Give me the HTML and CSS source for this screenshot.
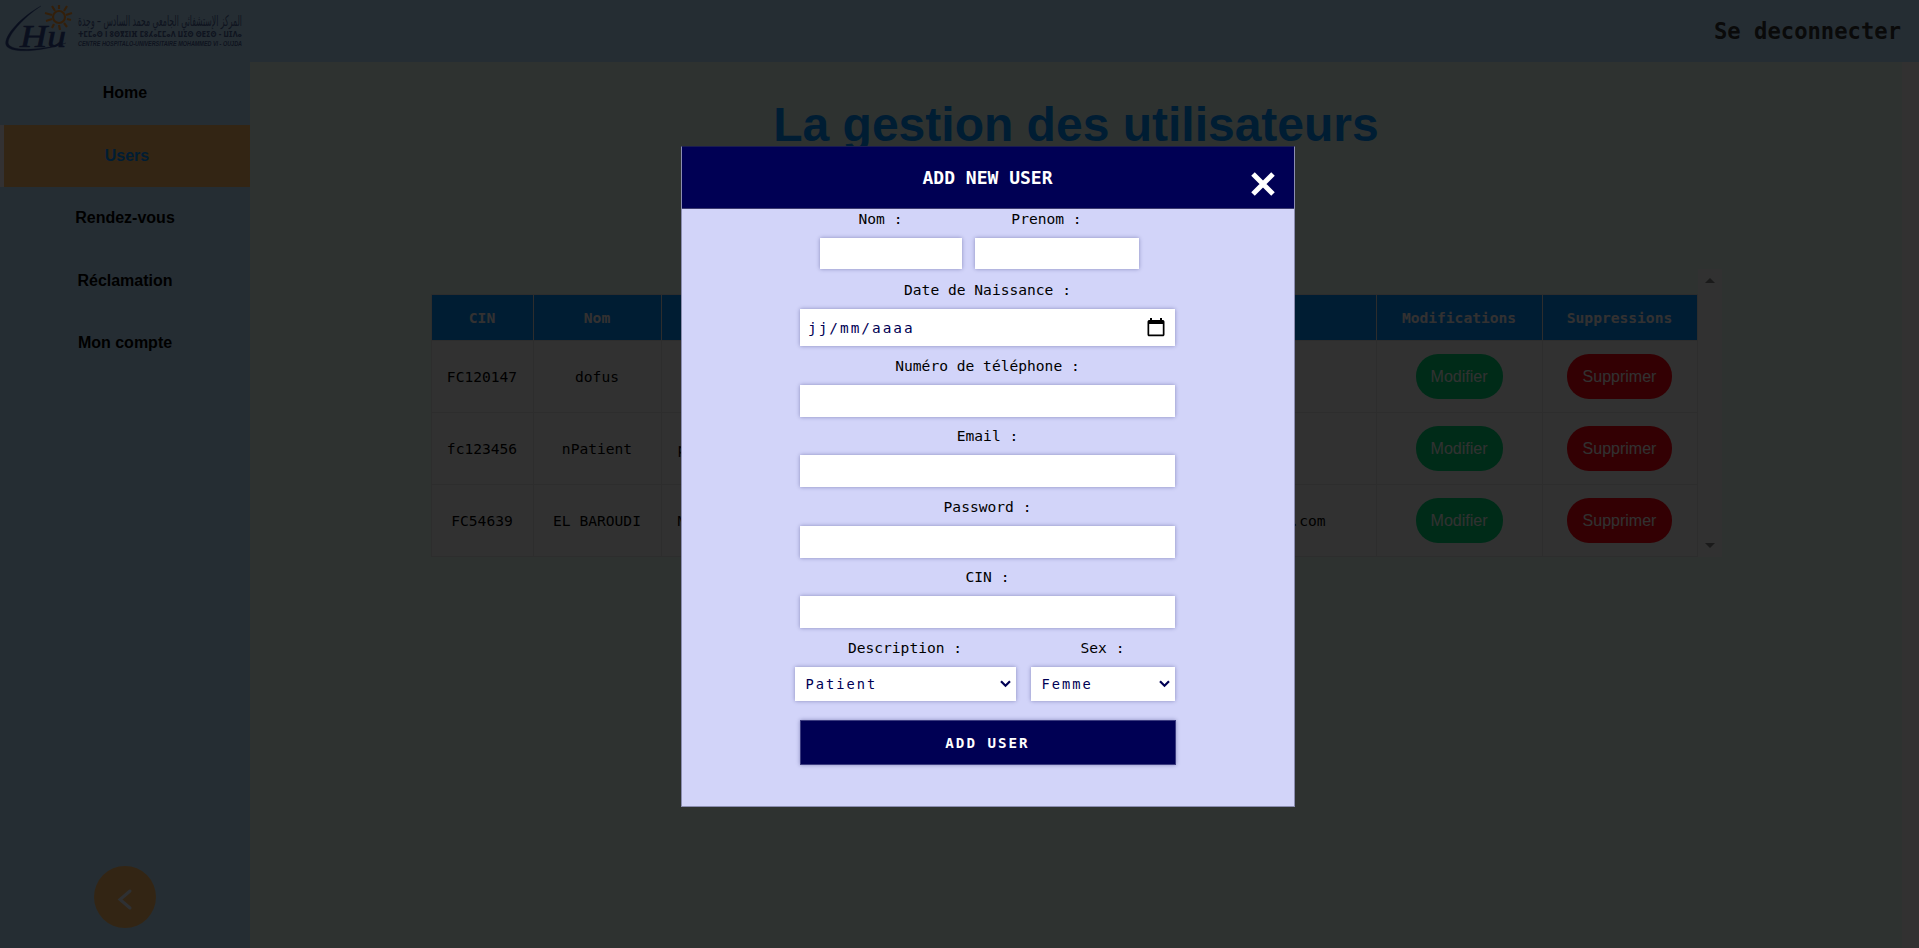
FILE: index.html
```html
<!DOCTYPE html>
<html lang="fr">
<head>
<meta charset="utf-8">
<title>La gestion des utilisateurs</title>
<link rel="stylesheet" href="styles.css">
</head>
<body>
<div class="app">
  <header class="topbar">
    <svg class="logo" width="250" height="62" viewBox="0 0 250 62">
      <path class="swoosh" d="M41 6C22 16 3 36 6 45C9 54 42 52 66 43C43 50 12 52 8.500 44C6 37 24 17 41 6Z"/>
      <text class="logo-hu" x="20" y="47" textLength="46" lengthAdjust="spacingAndGlyphs">Hu</text>
      <circle class="sun" cx="59" cy="17" r="6"/>
      <path class="sun" d="M59 9V5M64 11L67 6M66 15L72 13M67 19L71 20M64 23L67 27M59 25L60 30M54 24L52 28M52 19L46 21M52 15L45 13M55 11L52 6"/>
      <text class="logo-text arabic" x="242" y="26" direction="rtl" textLength="164" lengthAdjust="spacingAndGlyphs">المركز الإستشفائي الجامعي محمد السادس – وجدة</text>
      <text class="logo-text tifinagh" x="78" y="37" textLength="164" lengthAdjust="spacingAndGlyphs">ⵜⵎⵎⴰⵙ ⵏ ⵓⵙⴳⵉⵏⴼ ⵎⵓⵃⴰⵎⵎⴰⴷ ⵡⵉⵙ ⵙⴹⵉⵙ - ⵡⵊⴷⴰ</text>
      <text class="logo-text french" x="78" y="45.5" textLength="164" lengthAdjust="spacingAndGlyphs">CENTRE HOSPITALO-UNIVERSITAIRE MOHAMMED VI - OUJDA</text>
    </svg>
    <a class="logout">Se deconnecter</a>
  </header>
  <div class="columns">
    <nav class="sidebar">
      <a class="nav-item">Home</a>
      <a class="nav-item active">Users</a>
      <a class="nav-item">Rendez-vous</a>
      <a class="nav-item">Réclamation</a>
      <a class="nav-item">Mon compte</a>
      <button class="collapse" aria-label="Réduire">
        <svg width="62" height="62" viewBox="0 0 62 62"><path d="M36 25L26 33.500L36 42"/></svg>
      </button>
    </nav>
    <main class="content">
      <h1>La gestion des utilisateurs</h1>
      <div class="table-wrap">
        <table>
          <colgroup><col class="c1"><col class="c2"><col class="c3"><col class="c4"><col class="c5"><col class="c6"></colgroup>
          <tr><th>CIN</th><th>Nom</th><th></th><th></th><th>Modifications</th><th>Suppressions</th></tr>
          <tr><td>FC120147</td><td>dofus</td><td></td><td></td><td><button class="pill edit">Modifier</button></td><td><button class="pill delete">Supprimer</button></td></tr>
          <tr><td>fc123456</td><td>nPatient</td><td class="first-name">pPatient</td><td></td><td><button class="pill edit">Modifier</button></td><td><button class="pill delete">Supprimer</button></td></tr>
          <tr><td>FC54639</td><td>EL BAROUDI</td><td class="first-name">Mohamed</td><td class="mail">mohamed@gmail.com</td><td><button class="pill edit">Modifier</button></td><td><button class="pill delete">Supprimer</button></td></tr>
        </table>
        <div class="table-scroll"><i class="arrow up"></i><i class="arrow down"></i></div>
      </div>
    </main>
    <div class="page-scroll"></div>
  </div>
</div>
<div class="overlay">
  <section class="modal">
    <header class="modal-head">
      <h2>ADD NEW USER</h2>
      <svg class="close" width="26" height="26" viewBox="0 0 26 26"><path d="M3 3L23 23M23 3L3 23"/></svg>
    </header>
    <form class="form">
      <div class="row names">
        <label class="nom"><span class="caption">Nom :</span><span class="box"></span></label>
        <label class="prenom"><span class="caption">Prenom :</span><span class="box"></span></label>
      </div>
      <label class="date">Date de Naissance :
        <span class="box date-box"><span>jj/mm/aaaa</span>
          <svg width="18" height="19" viewBox="0 0 18 19"><path d="M16 2h-1V0h-2v2H5V0H3v2H2C1 2 .5 3 .5 4v12.500c0 1 .7 1.800 1.700 1.800h13.600c1 0 1.700-.8 1.700-1.800V4c0-1-.5-2-1.500-2zm-.2 14.600H2.200V6h13.600z"/></svg>
        </span>
      </label>
      <label class="tel">Numéro de téléphone :<span class="box"></span></label>
      <label class="email">Email :<span class="box"></span></label>
      <label class="password">Password :<span class="box"></span></label>
      <label class="cin">CIN :<span class="box"></span></label>
      <div class="row selects">
        <label class="role">Description :<span class="box select">Patient<svg width="11" height="8" viewBox="0 0 11 8"><path d="M1 1.200L5.500 5.800L10 1.200"/></svg></span></label>
        <label class="sex">Sex :<span class="box select">Femme<svg width="11" height="8" viewBox="0 0 11 8"><path d="M1 1.200L5.500 5.800L10 1.200"/></svg></span></label>
      </div>
      <button class="submit" type="button">ADD USER</button>
    </form>
  </section>
</div>
</body>
</html>
```
FILE: styles.css
```css
* { box-sizing: border-box; }
body {
  margin: 0;
  height: 948px;
  overflow: hidden;
  font-family: "DejaVu Sans Mono", monospace;
  font-size: 14.6px;
  color: #000;
}
.app { height: 948px; display: flex; flex-direction: column; background: #e6faf0; }
.topbar {
  height: 62px;
  flex: none;
  display: flex;
  justify-content: space-between;
  align-items: center;
  background: #b9e1ff;
  padding-right: 18px;
}
.logo { overflow: visible; }
.logout { font-size: 22.2px; font-weight: bold; color: #323232; margin-bottom: 1px; }
.swoosh { fill: #324b96; stroke: #324b96; stroke-width: .3; }
.logo-hu { font: italic 31px "Liberation Serif", serif; fill: #324b96; stroke: #324b96; stroke-width: .6; }
.sun { fill: none; stroke: #ff9b32; stroke-width: 2.2; }
.logo-text { fill: #4b649b; }
.arabic { font: 15px "DejaVu Sans", sans-serif; }
.tifinagh { font: bold 8.5px "DejaVu Sans", sans-serif; }
.french { font: italic bold 8px "Liberation Sans", sans-serif; }
.columns { flex: 1; display: flex; }
.sidebar {
  width: 250px;
  background: #b9e1ff;
  display: flex;
  flex-direction: column;
  align-items: center;
  padding-bottom: 20px;
}
.nav-item {
  width: 250px;
  height: 62.500px;
  display: flex;
  align-items: center;
  justify-content: center;
  font: bold 16px "Liberation Sans", Arial, sans-serif;
}
.nav-item.active { background: #ffb964; color: #0091ff; border-left: 4px solid #fff5fa; }
.collapse {
  margin-top: auto;
  width: 62px;
  height: 62px;
  padding: 0;
  border: 0;
  border-radius: 50%;
  background: #ffb964;
}
.collapse path { fill: none; stroke: #e6f0ff; stroke-width: 3; stroke-linecap: round; }
.content { flex: 1; display: flex; flex-direction: column; align-items: center; }
h1 {
  margin: 35px 0 0;
  font: bold 48px/55px "Liberation Sans", Arial, sans-serif;
  color: #0091ff;
}
.table-wrap { margin-top: 117px; display: flex; height: 288px; }
table { margin-top: 25px; width: 1266px; height: 263px; border-collapse: collapse; table-layout: fixed; background: #f5f5f5; }
.c1 { width: 102px; }
.c2 { width: 128px; }
.c3 { width: 150px; }
.c4 { width: 565px; }
.c5 { width: 166px; }
.c6 { width: 155px; }
th, td { border: 1px solid #e1e1e1; padding: 0; text-align: center; height: 72px; }
th { height: 46px; background: #0091ff; color: #fff5f5; }
.first-name { text-align: left; padding-left: 16px; }
.mail { text-align: right; padding-right: 50px; }
.pill {
  height: 45px;
  padding: 0;
  border: 0;
  border-radius: 22px;
  font: 16px "Liberation Sans", Arial, sans-serif;
  color: #f5f5f5;
}
.edit { width: 87px; background: #00d778; }
.delete { width: 105px; background: #ff000f; }
.table-scroll {
  width: 24px;
  background: #f5f5f5;
  display: flex;
  flex-direction: column;
  justify-content: space-between;
  align-items: center;
  padding: 9px 0;
}
.arrow { border: 5px solid transparent; }
.up { border-top: 0; border-bottom-color: #828282; }
.down { border-bottom: 0; border-top-color: #828282; }
.page-scroll { width: 17px; background: #faf5f5; }

.overlay {
  position: fixed;
  inset: 0;
  background: rgba(0, 0, 0, .8);
  display: flex;
  justify-content: center;
  align-items: flex-start;
  padding: 146px 0 0 56px;
}
.modal { width: 614px; height: 661px; background: #d2d4f9; border: 1px solid #8b8db0; border-top-color: #1a1c50; }
.modal-head {
  position: relative;
  height: 62px;
  background: #000054;
  border-bottom: 1px solid #3c3c70;
  display: flex;
  align-items: center;
  justify-content: center;
}
h2 { margin: 0; font-size: 18px; color: #fff; }
.close { position: absolute; right: 18px; top: 24px; }
.close path { stroke: #fff; stroke-width: 5; }
.form { display: flex; flex-direction: column; align-items: center; }
.form label { display: flex; flex-direction: column; align-items: center; line-height: 20px; }
.row { display: flex; }
.box {
  width: 375px;
  height: 32px;
  margin-top: 9px;
  background: #fff;
  box-shadow: 0 0 4px rgba(0, 0, 84, .35);
}
.names { gap: 13px; width: 335px; }
.caption { margin-right: 21px; }
.nom .box { width: 142px; }
.prenom .box { width: 164px; }
.names, .nom, .prenom { height: 60px; }
.date { height: 76px; margin-top: 11px; }
.date .box { height: 37px; display: flex; align-items: center; justify-content: space-between; padding: 0 10px 0 8px; font-size: 14.4px; letter-spacing: 2px; color: #000054; }
.tel { height: 70px; }
.email { height: 71px; }
.password { height: 70px; }
.cin { height: 71px; }
.selects { gap: 15px; width: 386px; height: 82px; }
.role .box { width: 221px; }
.sex .box { width: 144px; }
.form .select {
  height: 34px;
  display: flex;
  align-items: center;
  justify-content: space-between;
  padding: 0 5px 0 11px;
  font-size: 13.7px;
  letter-spacing: 2px;
  color: #000054;
}
.select path { fill: none; stroke: #000054; stroke-width: 2.2; }
.submit {
  width: 376px;
  height: 45px;
  padding: 0;
  border: 1px solid #3c3c80;
  background: #000054;
  color: #fff;
  font: bold 14.2px "DejaVu Sans Mono", monospace;
  letter-spacing: 2px;
  box-shadow: 0 0 4px rgba(0, 0, 84, .35);
}
```
